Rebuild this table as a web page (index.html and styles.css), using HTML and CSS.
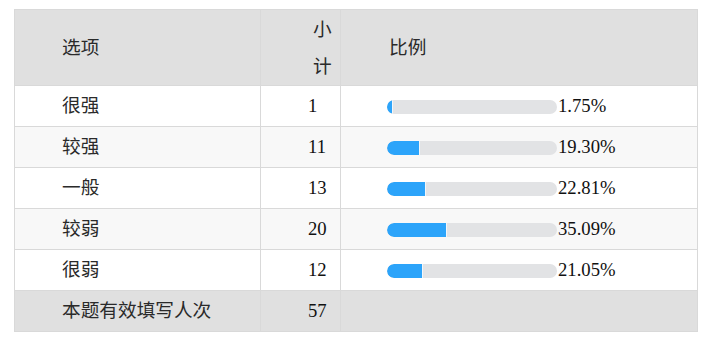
FILE: index.html
```html
<!DOCTYPE html>
<html lang="zh-CN">
<head>
<meta charset="utf-8">
<title>统计</title>
<link rel="stylesheet" href="styles.css">
</head>
<body>
<div class="wrap">
  <table class="stat">
    <colgroup>
      <col class="c1"><col class="c2"><col class="c3">
    </colgroup>
    <thead>
      <tr>
        <th class="opt">选项</th>
        <th class="cnt">小计</th>
        <th class="pct">比例</th>
      </tr>
    </thead>
    <tbody>
      <tr>
        <td class="opt">很强</td>
        <td class="cnt">1</td>
        <td class="pct"><span class="bar"><span class="fill" style="width:1.75%"></span></span><span class="num">1.75%</span></td>
      </tr>
      <tr class="alt">
        <td class="opt">较强</td>
        <td class="cnt">11</td>
        <td class="pct"><span class="bar"><span class="fill" style="width:19.30%"></span></span><span class="num">19.30%</span></td>
      </tr>
      <tr>
        <td class="opt">一般</td>
        <td class="cnt">13</td>
        <td class="pct"><span class="bar"><span class="fill" style="width:22.81%"></span></span><span class="num">22.81%</span></td>
      </tr>
      <tr class="alt">
        <td class="opt">较弱</td>
        <td class="cnt">20</td>
        <td class="pct"><span class="bar"><span class="fill" style="width:35.09%"></span></span><span class="num">35.09%</span></td>
      </tr>
      <tr>
        <td class="opt">很弱</td>
        <td class="cnt">12</td>
        <td class="pct"><span class="bar"><span class="fill" style="width:21.05%"></span></span><span class="num">21.05%</span></td>
      </tr>
      <tr class="total">
        <td class="opt">本题有效填写人次</td>
        <td class="cnt">57</td>
        <td class="pct"></td>
      </tr>
    </tbody>
  </table>
</div>
</body>
</html>
```

FILE: styles.css
```css
html, body {
  margin: 0;
  padding: 0;
  background: #ffffff;
}

body {
  font-family: "Liberation Serif", "Noto Sans CJK SC", serif;
  font-size: 18.67px;
  color: #222222;
}

.wrap {
  padding: 9px 0 0 14px;
}

.stat {
  border-collapse: collapse;
  table-layout: fixed;
  width: 683px;
}

.c1 { width: 246px; }
.c2 { width: 80px; }
.c3 { width: 357px; }

.stat th,
.stat td {
  border: 1px solid #d9d9d9;
  padding: 0 0 0 47px;
  text-align: left;
  font-weight: normal;
  vertical-align: middle;
  white-space: nowrap;
}

.stat thead th {
  background: #e0e0e0;
  line-height: 37px;
  height: 75px;
  color: #2a2a2a;
}

.stat thead th.cnt {
  white-space: normal;
  padding: 0 8px 0 52px;
  word-break: break-all;
}

.stat thead th.pct {
  padding-left: 48px;
}

.stat td {
  height: 40px;
  line-height: 40px;
}

.stat td.pct {
  padding-left: 46px;
}

.stat td.cnt {
  padding-left: 47px;
  color: #111111;
}

.stat td.opt {
  color: #2a2a2a;
}

.stat tr.alt td {
  background: #f8f8f8;
}

.stat tr.total td {
  background: #e0e0e0;
}

.bar {
  display: inline-block;
  vertical-align: middle;
  width: 170px;
  height: 14px;
  border-radius: 7px;
  background: #e2e3e5;
  overflow: hidden;
  position: relative;
  top: -1px;
}

.fill {
  display: block;
  height: 14px;
  min-width: 6px;
  background: #2ca4fa;
  border-radius: 7px 0 0 7px;
  border-right: 1px solid #f2f6fa;
  box-sizing: border-box;
}

.num {
  color: #111111;
  margin-left: 1px;
}
```
